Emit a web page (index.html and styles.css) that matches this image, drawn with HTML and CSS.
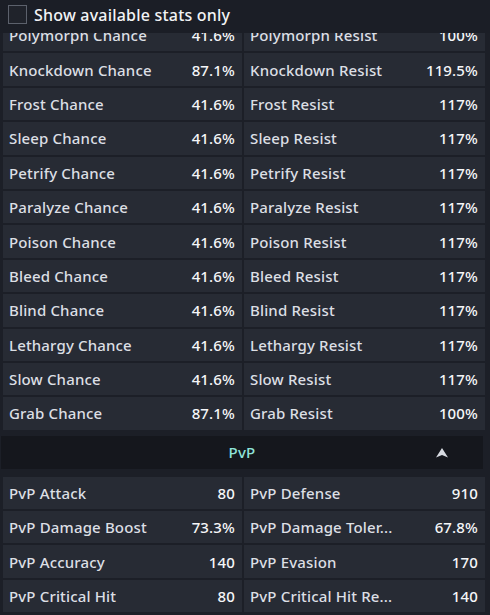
FILE: index.html
```html
<!DOCTYPE html>
<html>
<head>
<meta charset="utf-8">
<link rel="stylesheet" href="styles.css">
</head>
<body>
<div class="topbar">
  <span class="checkbox"></span>
  <span class="toplabel">Show available stats only</span>
</div>
<div class="panel">
  <div class="grid">
    <div class="cell"><span class="name">Polymorph Chance</span><span class="val">41.6%</span></div>
    <div class="cell"><span class="name">Polymorph Resist</span><span class="val">100%</span></div>
    <div class="cell"><span class="name">Knockdown Chance</span><span class="val">87.1%</span></div>
    <div class="cell"><span class="name">Knockdown Resist</span><span class="val">119.5%</span></div>
    <div class="cell"><span class="name">Frost Chance</span><span class="val">41.6%</span></div>
    <div class="cell"><span class="name">Frost Resist</span><span class="val">117%</span></div>
    <div class="cell"><span class="name">Sleep Chance</span><span class="val">41.6%</span></div>
    <div class="cell"><span class="name">Sleep Resist</span><span class="val">117%</span></div>
    <div class="cell"><span class="name">Petrify Chance</span><span class="val">41.6%</span></div>
    <div class="cell"><span class="name">Petrify Resist</span><span class="val">117%</span></div>
    <div class="cell"><span class="name">Paralyze Chance</span><span class="val">41.6%</span></div>
    <div class="cell"><span class="name">Paralyze Resist</span><span class="val">117%</span></div>
    <div class="cell"><span class="name">Poison Chance</span><span class="val">41.6%</span></div>
    <div class="cell"><span class="name">Poison Resist</span><span class="val">117%</span></div>
    <div class="cell"><span class="name">Bleed Chance</span><span class="val">41.6%</span></div>
    <div class="cell"><span class="name">Bleed Resist</span><span class="val">117%</span></div>
    <div class="cell"><span class="name">Blind Chance</span><span class="val">41.6%</span></div>
    <div class="cell"><span class="name">Blind Resist</span><span class="val">117%</span></div>
    <div class="cell"><span class="name">Lethargy Chance</span><span class="val">41.6%</span></div>
    <div class="cell"><span class="name">Lethargy Resist</span><span class="val">117%</span></div>
    <div class="cell"><span class="name">Slow Chance</span><span class="val">41.6%</span></div>
    <div class="cell"><span class="name">Slow Resist</span><span class="val">117%</span></div>
    <div class="cell"><span class="name">Grab Chance</span><span class="val">87.1%</span></div>
    <div class="cell"><span class="name">Grab Resist</span><span class="val">100%</span></div>
  </div>
  <div class="section">
    <span class="section-title">PvP</span>
    <svg class="arrow" width="12" height="10" viewBox="0 0 12 10"><path d="M6 0 L12 9.5 L6 7 L0 9.5 Z" fill="#d8dbe2"/></svg>
  </div>
  <div class="grid">
    <div class="cell"><span class="name">PvP Attack</span><span class="val">80</span></div>
    <div class="cell"><span class="name">PvP Defense</span><span class="val">910</span></div>
    <div class="cell"><span class="name">PvP Damage Boost</span><span class="val">73.3%</span></div>
    <div class="cell"><span class="name">PvP Damage Toler...</span><span class="val">67.8%</span></div>
    <div class="cell"><span class="name">PvP Accuracy</span><span class="val">140</span></div>
    <div class="cell"><span class="name">PvP Evasion</span><span class="val">170</span></div>
    <div class="cell"><span class="name">PvP Critical Hit</span><span class="val">80</span></div>
    <div class="cell"><span class="name">PvP Critical Hit Re...</span><span class="val">140</span></div>
  </div>
</div>
</body>
</html>
```
FILE: styles.css
```css
html, body {
  margin: 0;
  padding: 0;
  background: #1c1f27;
  width: 490px;
  height: 615px;
  overflow: hidden;
  font-family: "Noto Sans", "DejaVu Sans", sans-serif;
}
.topbar {
  position: fixed;
  top: 0;
  left: 0;
  width: 490px;
  height: 33px;
  background: #1b1e26;
  display: flex;
  align-items: center;
  z-index: 2;
}
.checkbox {
  width: 17px;
  height: 17px;
  margin-left: 8px;
  border: 1px solid #5c616c;
  background: #20232b;
  margin-top: -4px;
}
.toplabel {
  margin-left: 7px;
  margin-top: -4px;
  color: #f2f3f5;
  font-size: 16px;
  font-weight: 500;
  letter-spacing: 0.2px;
}
.panel {
  padding-top: 19px;
  padding-left: 3px;
  width: 482px;
}
.grid {
  display: grid;
  grid-template-columns: 239px 241px;
  column-gap: 2px;
  row-gap: 2px;
}
.cell {
  height: 32.4px;
  background: #272b34;
  display: flex;
  align-items: center;
  justify-content: space-between;
  padding: 0 7px 0 6px;
  font-size: 15px;
  font-weight: 500;
  letter-spacing: 0.15px;
}
.name {
  color: #dcdfe4;
}
.val {
  color: #f5f6f8;
}
.section {
  height: 33px;
  margin: 6px 0 8px -2px;
  background: #15171d;
  display: flex;
  align-items: center;
  justify-content: center;
  position: relative;
  width: 482px;
}
.section-title {
  color: #8fe3da;
  font-size: 15px;
  font-weight: 500;
  letter-spacing: 0.3px;
}
.arrow {
  position: absolute;
  left: 435px;
  top: 12px;
}
```
